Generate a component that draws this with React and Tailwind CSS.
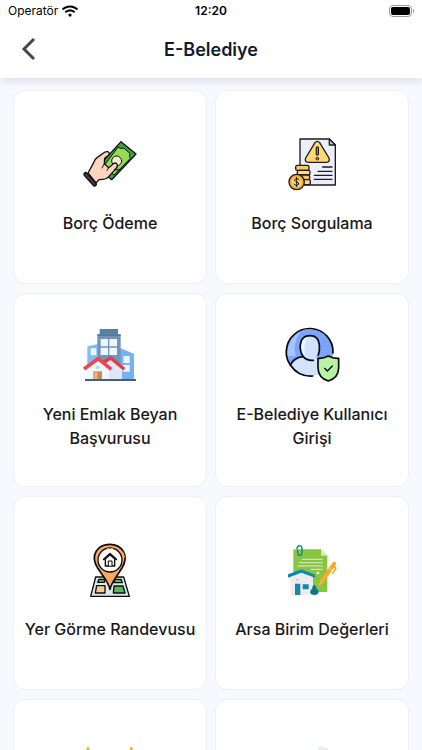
import { FaWifi } from "react-icons/fa";

const iconClass = "block h-14 w-14";

const PaymentIcon = () => (
  <svg viewBox="36 21 168 168" className={iconClass} aria-hidden="true">
    <g stroke="#111" strokeWidth="4" strokeLinejoin="round" strokeLinecap="round">
      <path d="M153 38 L198 75 L125 152 L82 116 Z" fill="#3fa142" />
      <path
        d="M145 55 Q153 61 161 57 L180 73 Q176 80 181 88 L132 138 L102 112 Z"
        fill="#96dc55"
        strokeWidth="3"
      />
      <circle cx="140" cy="96" r="15" fill="#f7eccd" strokeWidth="3" />
      <path
        d="M54 132 L70 103 Q73 91 82 85 L105 69 Q115 65 118 73 Q118 79 104 88 L103 104 L116 116 Q123 112 130 104 Q139 99 142 107 Q144 113 136 121 L116 143 Q107 152 98 151 L87 152 L78 162 Z"
        fill="#fcd5c0"
      />
      <path d="M103 104 L96 117 M116 116 L111 124" fill="none" strokeWidth="3" />
      <path d="M133 122 Q141 126 146 121" fill="none" strokeWidth="3" />
    </g>
    <path d="M47 136 L74 166" stroke="#111" strokeWidth="14" strokeLinecap="round" />
    <path d="M48 137 L73 165" stroke="#3b3b40" strokeWidth="7" strokeLinecap="round" />
  </svg>
);

const DebtIcon = () => (
  <svg viewBox="27 21 168 168" className={iconClass} aria-hidden="true">
    <g stroke="#1c1c22" strokeWidth="4" strokeLinejoin="round" strokeLinecap="round">
      <path d="M75 30 H163 L181 48 V168 H75 Z" fill="#ebeff7" />
      <path d="M163 30 V48 H181 Z" fill="#c3cad8" />
      <path
        d="M120 41 Q127 33 134 41 L162 87 Q166 99 154 100 H100 Q88 99 92 87 Z"
        fill="#fed871"
      />
      <path d="M127 57 V75" strokeWidth="10" />
      <path d="M127 57 V75" stroke="#e98736" strokeWidth="3" />
      <circle cx="127" cy="89" r="4" fill="#e98736" strokeWidth="3" />
      <path d="M143 114 H171 M129 127 H171 M118 139 H171 M118 151 H171" />
      <rect x="62" y="109" width="40" height="15" rx="5" fill="#fec957" />
      <rect x="67" y="124" width="38" height="14" rx="5" fill="#ffdc7e" />
      <rect x="62" y="138" width="42" height="14" rx="5" fill="#fec957" />
      <rect x="68" y="152" width="38" height="15" rx="5" fill="#ffdc7e" />
      <circle cx="65" cy="159" r="23" fill="#f9a932" />
      <circle cx="65" cy="159" r="16" fill="#fed069" stroke="none" />
      <path
        d="M72 152 Q69 148 64 149 Q57 150 59 155 Q61 158 65 159 Q72 160 71 165 Q69 170 64 169 Q59 169 57 165 M65 145 V173"
        fill="none"
        strokeWidth="3"
      />
    </g>
  </svg>
);

const EstateIcon = () => (
  <svg viewBox="36 24 168 168" className={iconClass} aria-hidden="true">
    <path d="M52 82 L84 75 V182 H52 Z" fill="#82bdf7" />
    <path d="M149 87 L192 104 V181 H149 Z" fill="#73b2f5" />
    <path d="M89 30 H144 V48 H89 Z" fill="#5a80a3" />
    <path d="M82 46 H152 V181 H82 Z" fill="#7194b8" />
    <path d="M82 46 H152 V51 H82 Z" fill="#547897" />
    <g fill="#edf6ff">
      <path d="M92 60 H114 V82 H92 Z M118 60 H141 V82 H118 Z" />
      <path d="M92 86 H114 V108 H92 Z M118 86 H141 V108 H118 Z" />
      <path d="M62 88 H79 V109 H62 Z M160 111 H179 V132 H160 Z M158 138 H179 V158 H158 Z" />
    </g>
    <path d="M92 148 L122 119 L156 150 V181 H92 Z" fill="#dce8f5" />
    <path d="M49 149 L84 119 L117 149 V181 H49 Z" fill="#f3f8ff" />
    <path
      d="M100 130 L122 117 L163 151"
      fill="none"
      stroke="#de3d49"
      strokeWidth="10"
      strokeLinejoin="round"
    />
    <path
      d="M42 150 L84 119 L124 151"
      fill="none"
      stroke="#ef4650"
      strokeWidth="11"
      strokeLinejoin="round"
    />
    <circle cx="83" cy="145" r="6" fill="#b9d9f5" />
    <path d="M70 157 H96 V181 H70 Z" fill="#c98a5c" />
    <path d="M73 159 H82 V181 H73 Z" fill="#edb77d" />
    <path d="M45 180 H198 V186 H45 Z" fill="#446079" />
  </svg>
);

const UserIcon = () => (
  <svg viewBox="27 24 168 168" className={iconClass} aria-hidden="true">
    <circle cx="104" cy="101" r="70" fill="#7ba5fa" />
    <path d="M37 112 Q34 62 77 38 Q51 73 62 111 Z" fill="#a6c4ff" />
    <path
      d="M49 138 Q61 117 85 113 Q76 100 77 78 Q78 50 105 50 Q132 50 132 79 Q133 98 123 113 L133 119 V165 Q82 186 49 138 Z"
      fill="#d2e4fd"
    />
    <path d="M77 85 Q78 55 99 52 Q84 75 90 108 Q82 108 77 85 Z" fill="#edf5ff" />
    <g fill="none" stroke="#080808" strokeWidth="5" strokeLinecap="round" strokeLinejoin="round">
      <path d="M174 102 A70 70 0 0 0 34 95 Q32 119 46 138 Q70 174 113 171" />
      <path d="M46 138 Q57 116 83 113" />
      <path d="M130 108 Q135 93 133 77 Q130 50 105 50 Q79 50 76 77 Q74 97 84 112 Q96 126 115 124" />
      <path
        d="M160 111 Q174 119 191 118 V147 Q190 177 160 186 Q130 177 129 147 V118 Q145 119 160 111 Z"
        fill="#b8f2a2"
      />
      <path d="M149 148 L157 156 L172 141" strokeWidth="4" />
    </g>
  </svg>
);

const MapIcon = () => (
  <svg viewBox="36 21 168 168" className={iconClass} aria-hidden="true">
    <g stroke="#0c0c0c" strokeWidth="4" strokeLinejoin="round" strokeLinecap="round">
      <path d="M77 126 H161 L178 184 H62 Z" fill="#d7e9ee" />
      <path d="M87 133 H105 L103 142 H83 Z" fill="#59b65a" />
      <path d="M135 133 H153 L157 143 H132 Z" fill="#59b65a" />
      <path d="M80 152 H105 V174 H76 Z" fill="#fecb89" />
      <path d="M132 153 H159 L165 174 H130 Z" fill="#59b65a" />
      <path
        d="M120 163 Q117 150 105 131 L83 99 Q65 71 79 48 Q92 28 119 28 Q147 28 160 49 Q173 71 156 99 L135 131 Q123 150 120 163 Z"
        fill="#fca864"
        strokeWidth="5"
      />
      <circle cx="120" cy="75" r="36" fill="#fff" />
      <path d="M163 67 Q164 58 157 50" fill="none" stroke="#fca864" strokeWidth="3" />
      <path d="M101 73 L120 56 L139 73" fill="none" strokeWidth="5" />
      <path d="M106 71 V93 H134 V71 L120 59 Z" fill="#f2f2ee" />
      <path d="M115 92 V78 H126 V92" fill="#fff" strokeWidth="3" />
      <path d="M113 41 H117 M123 41 H128" stroke="#fca864" />
    </g>
  </svg>
);

const LandIcon = () => (
  <svg viewBox="27 21 168 168" className={iconClass} aria-hidden="true">
    <path d="M55 43 H138 L157 62 V171 H55 Z" fill="#88c540" />
    <path d="M138 43 L157 62 H138 Z" fill="#d5ecbd" />
    <path
      d="M82 73 H142 M73 83 H142 M69 93 H142 M108 103 H142"
      stroke="#dff0c6"
      strokeWidth="3"
      strokeLinecap="round"
    />
    <circle cx="129" cy="114" r="4" fill="#f2f8de" />
    <path
      d="M68 47 V54 Q69 62 76 61 Q81 60 81 53 V40 Q80 32 73 32 Q66 34 66 42"
      fill="none"
      stroke="#087f9e"
      strokeWidth="4"
      strokeLinecap="round"
    />
    <path d="M46 121 L79 103 L114 121 V180 H46 Z" fill="#ededf0" />
    <path
      d="M39 118 L79 103 L120 119 V128 L79 113 L39 128 Z"
      fill="#088bae"
    />
    <circle cx="67" cy="134" r="3" fill="#fab24b" />
    <path d="M60 146 H76 V180 H60 Z M83 148 H101 V163 H83 Z" fill="#1289a9" />
    <path
      d="M117 149 Q110 154 112 160 Q105 166 105 172 Q108 180 118 180 Q130 180 131 171 Q130 165 124 160 Q125 154 117 149 Z"
      fill="#07778f"
    />
    <path d="M131 153 L136 134 L172 84 Q177 78 182 82 Q186 85 182 90 L147 141 Z" fill="#fcaa25" />
    <path
      d="M176 95 L183 100 L173 116"
      fill="none"
      stroke="#f49b19"
      strokeWidth="4"
      strokeLinecap="round"
      strokeLinejoin="round"
    />
    <path d="M131 153 L135 138 L144 144 Z" fill="#edb35b" />
    <path d="M161 99 L171 106" stroke="#fff1b4" strokeWidth="2" />
  </svg>
);

const ScaleIcon = () => (
  <svg viewBox="0 0 168 168" className={iconClass} aria-hidden="true">
    <rect x="14" y="6" width="8" height="60" rx="3" fill="#e2b92e" />
    <rect x="144" y="6" width="8" height="60" rx="3" fill="#e2b92e" />
    <path d="M14 60 H152 V150 H14 Z" fill="#f4d35e" />
  </svg>
);

const DocumentIcon = () => (
  <svg viewBox="0 0 168 168" className={iconClass} aria-hidden="true">
    <path d="M105 2 L132 9 L122 60 L92 55 Z" fill="#e3eff4" />
    <path d="M30 55 H140 V150 H30 Z" fill="#e3eff4" />
  </svg>
);

const services = [
  { id: 1, title: "Borç Ödeme", icon: <PaymentIcon /> },
  { id: 2, title: "Borç Sorgulama", icon: <DebtIcon /> },
  { id: 3, title: "Yeni Emlak Beyan Başvurusu", icon: <EstateIcon /> },
  { id: 4, title: "E-Belediye Kullanıcı Girişi", icon: <UserIcon /> },
  { id: 5, title: "Yer Görme Randevusu", icon: <MapIcon /> },
  { id: 6, title: "Arsa Birim Değerleri", icon: <LandIcon /> },
  { id: 7, title: "", icon: <ScaleIcon /> },
  { id: 8, title: "", icon: <DocumentIcon /> },
];

const StatusBar = () => (
  <div className="grid h-[22px] grid-cols-3 items-center px-2 text-xs text-black">
    <div className="flex items-center gap-1">
      <span>Operatör</span>
      <FaWifi className="h-4 w-4" />
    </div>
    <span className="text-center font-semibold">12:20</span>
    <div className="flex items-center justify-end gap-px">
      <div className="h-3 w-[23px] rounded-sm border border-[#999] p-px">
        <div className="h-full rounded-[2px] bg-black" />
      </div>
      <div className="h-1 w-px rounded-r bg-[#999]" />
    </div>
  </div>
);

const ServiceCard = ({ title, icon }) => (
  <button
    type="button"
    className="flex aspect-square w-full cursor-pointer flex-col items-center justify-center gap-[19px] rounded-xl border border-[#eeeef3] bg-white px-2 pb-[3px]"
  >
    {icon}
    <span className="min-h-6 text-center text-base leading-6 font-medium text-[#18181b]">
      {title}
    </span>
  </button>
);

const App = () => {
  return (
    <div className="flex h-screen flex-col bg-[#f8f9ff] font-['Inter',sans-serif]">
      <header className="z-10 bg-white shadow-[0_3px_8px_rgba(30,30,60,0.12)]">
        <StatusBar />
        <div className="grid h-14 grid-cols-[40px_1fr_40px] items-center px-2">
          <button
            type="button"
            aria-label="Geri"
            className="flex h-10 w-10 cursor-pointer items-center justify-center"
          >
            <svg viewBox="0 0 24 24" className="h-6 w-6" fill="none" aria-hidden="true">
              <path
                d="M18 1 L8 11 L18 21"
                stroke="#46474b"
                strokeWidth="3"
                strokeLinejoin="miter"
              />
            </svg>
          </button>
          <h1 className="text-center text-lg font-semibold text-[#101b2c]">
            E-Belediye
          </h1>
        </div>
      </header>
      <main className="grid flex-1 auto-rows-max grid-cols-2 gap-x-2 gap-y-[9px] overflow-y-auto px-[13px] py-3 [scrollbar-width:none]">
        {services.map((item) => (
          <ServiceCard key={item.id} title={item.title} icon={item.icon} />
        ))}
      </main>
    </div>
  );
};

export default App;
